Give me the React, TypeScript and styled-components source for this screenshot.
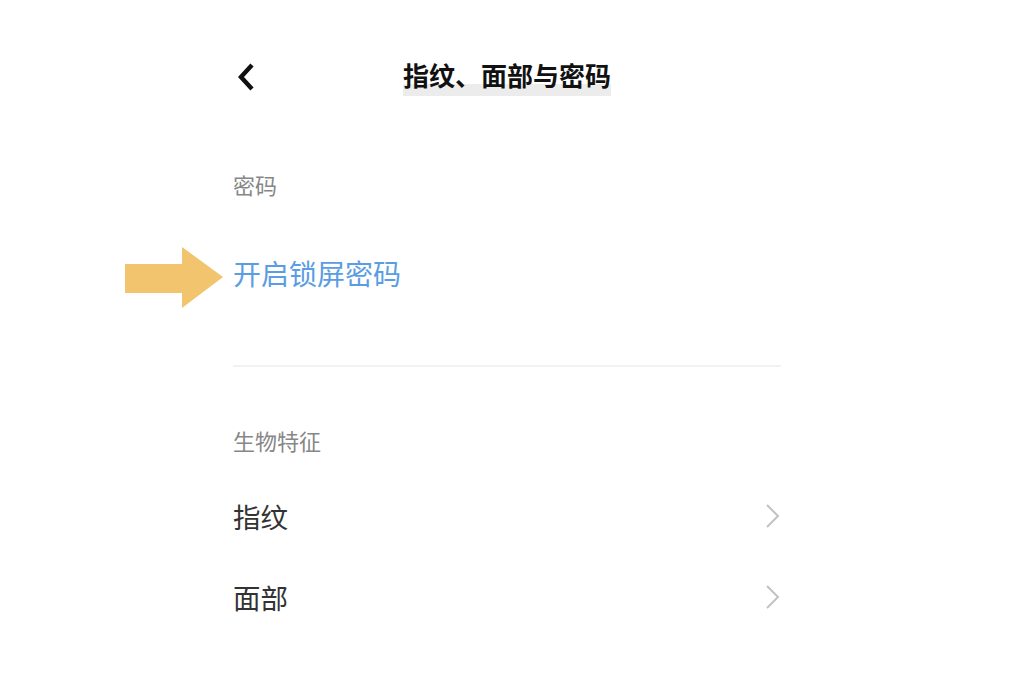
import * as React from 'react';
import styled, { createGlobalStyle } from 'styled-components';

const GlobalStyle = createGlobalStyle`
  body {
    margin: 0;
    background: #fff;
    font-family: "Noto Sans CJK SC", "Noto Sans", sans-serif;
  }
`;

const Screen = styled.div`
  width: 548px;
  margin-left: 233px;
  padding-top: 52px;
`;

const Header = styled.header`
  display: grid;
  grid-template-columns: 1fr auto 1fr;
  align-items: center;
  height: 50px;
`;

const BackButton = styled.div`
  display: flex;
  align-items: center;
  padding-left: 3px;
`;

const Title = styled.h1`
  position: relative;
  top: 2px;
  margin: 0;
  height: 34px;
  font-size: 26px;
  line-height: 26px;
  font-weight: 700;
  color: #111;
  background: linear-gradient(to bottom, transparent 0, transparent 22px, #ececec 22px, #ececec 34px);
`;

const SectionLabel = styled.div<{ $top: number }>`
  margin-top: ${p => p.$top}px;
  height: 40px;
  display: flex;
  align-items: center;
  font-size: 22px;
  color: #878787;
`;

const ActionItem = styled.div`
  position: relative;
  margin-top: 29px;
  height: 80px;
  display: flex;
  align-items: center;
  font-size: 28px;
  color: #5b9de2;
`;

const Pointer = styled.svg`
  position: absolute;
  left: -108px;
  top: 14px;
`;

const Divider = styled.div`
  margin-top: 52px;
  height: 2px;
  background: #f2f2f2;
`;

const List = styled.div`
  margin-top: 15px;
`;

const Row = styled.div`
  height: 81px;
  display: flex;
  align-items: center;
  justify-content: space-between;
  font-size: 27.5px;
  color: #333;
`;

const Chevron = () => (
  <svg width="16" height="26" viewBox="0 0 16 26">
    <path d="M2 2 L13 13 L2 24" fill="none" stroke="#c2c2c2" strokeWidth="2" />
  </svg>
);

export default function App() {
  return (
    <>
      <GlobalStyle />
      <Screen>
        <Header>
          <BackButton>
            <svg width="20" height="28" viewBox="0 0 20 28">
              <path d="M16 2 L5 14 L16 26" fill="none" stroke="#111" strokeWidth="4.4" />
            </svg>
          </BackButton>
          <Title>指纹、面部与密码</Title>
          <div />
        </Header>

        <SectionLabel $top={62}>密码</SectionLabel>
        <ActionItem>
          <Pointer width="98" height="61" viewBox="0 0 98 61">
            <polygon points="0,17 57,17 57,0 98,30 57,61 57,46 0,46" fill="#f2c46d" />
          </Pointer>
          开启锁屏密码
        </ActionItem>
        <Divider />

        <SectionLabel $top={53}>生物特征</SectionLabel>
        <List>
          <Row>
            指纹
            <Chevron />
          </Row>
          <Row>
            面部
            <Chevron />
          </Row>
        </List>
      </Screen>
    </>
  );
}
